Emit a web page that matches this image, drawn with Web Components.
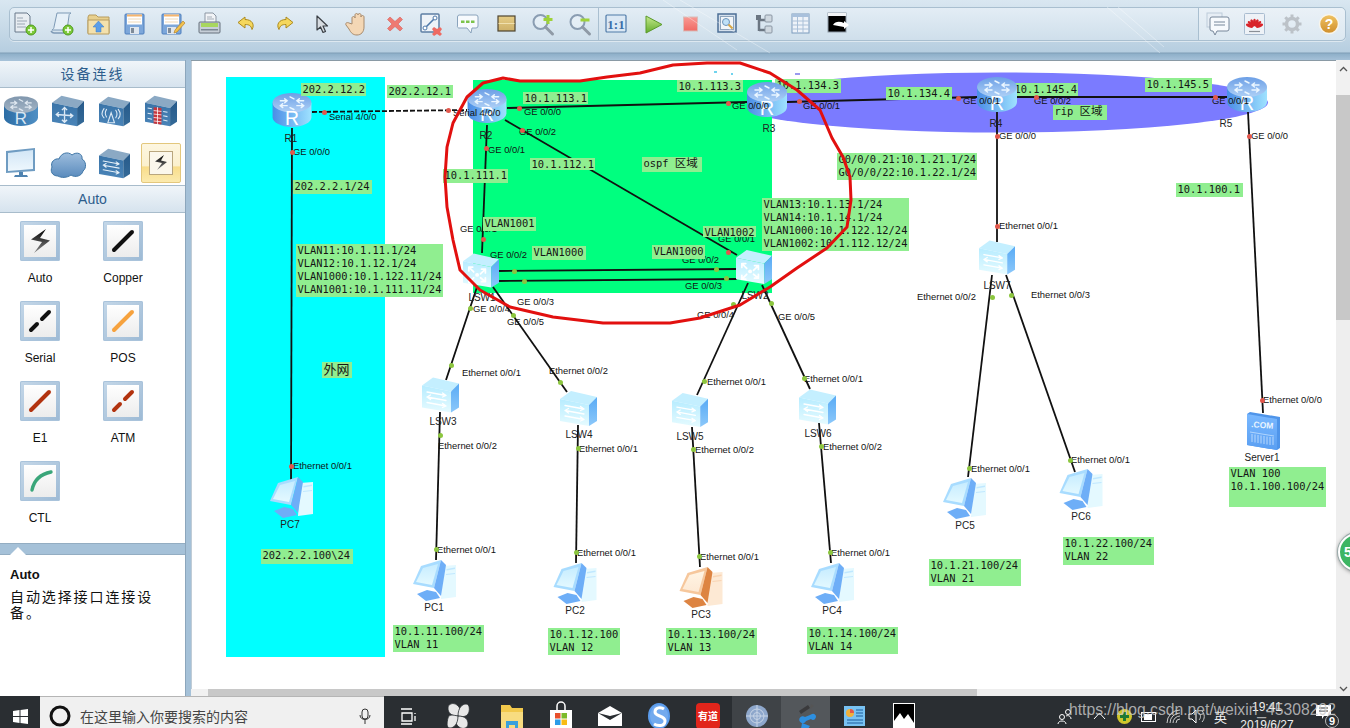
<!doctype html>
<html lang="zh">
<head>
<meta charset="utf-8">
<title>eNSP</title>
<style>
  html, body { margin: 0; height: 100%; overflow: hidden; background: #a5c1d8; }
</style>
</head>
<body>
<ensp-window>
  <tool-bar slot="top">
    <tool-icon slot="left" name="newdoc"></tool-icon>
    <tool-icon slot="left" name="scroll"></tool-icon>
    <tool-icon slot="left" name="open"></tool-icon>
    <tool-icon slot="left" name="save"></tool-icon>
    <tool-icon slot="left" name="saveas"></tool-icon>
    <tool-icon slot="left" name="print"></tool-icon>
    <tool-icon slot="left" name="undo"></tool-icon>
    <tool-icon slot="left" name="redo"></tool-icon>
    <tool-icon slot="left" name="cursor"></tool-icon>
    <tool-icon slot="left" name="hand"></tool-icon>
    <tool-icon slot="left" name="del"></tool-icon>
    <tool-icon slot="left" name="dellink"></tool-icon>
    <tool-icon slot="left" name="note"></tool-icon>
    <tool-icon slot="left" name="rect"></tool-icon>
    <tool-icon slot="left" name="zoomin"></tool-icon>
    <tool-icon slot="left" name="zoomout"></tool-icon>
    <tool-icon slot="mid" name="fit"></tool-icon>
    <tool-icon slot="mid" name="play"></tool-icon>
    <tool-icon slot="mid" name="stop"></tool-icon>
    <tool-icon slot="mid" name="capture"></tool-icon>
    <tool-icon slot="mid" name="tree"></tool-icon>
    <tool-icon slot="mid" name="table"></tool-icon>
    <tool-icon slot="mid" name="console"></tool-icon>
    <tool-icon slot="right" name="chat"></tool-icon>
    <tool-icon slot="right" name="huawei"></tool-icon>
    <tool-icon slot="right" name="gear"></tool-icon>
    <tool-icon slot="right" name="help"></tool-icon>
  </tool-bar>

  <side-bar slot="side">
    <panel-head>设备连线</panel-head>
    <device-grid>
      <device-tile kind="router"></device-tile>
      <device-tile kind="switch3"></device-tile>
      <device-tile kind="wireless"></device-tile>
      <device-tile kind="firewall"></device-tile>
      <device-tile kind="monitor"></device-tile>
      <device-tile kind="cloud"></device-tile>
      <device-tile kind="switch2"></device-tile>
      <device-tile kind="auto" selected></device-tile>
    </device-grid>
    <panel-head class="second">Auto</panel-head>
    <link-grid>
      <link-tile kind="auto">Auto</link-tile>
      <link-tile kind="copper">Copper</link-tile>
      <link-tile kind="serial">Serial</link-tile>
      <link-tile kind="pos">POS</link-tile>
      <link-tile kind="e1">E1</link-tile>
      <link-tile kind="atm">ATM</link-tile>
      <link-tile kind="ctl">CTL</link-tile>
    </link-grid>
    <help-box heading="Auto">自动选择接口连接设备。</help-box>
  </side-bar>

  <topo-canvas slot="canvas">
    <!-- these notes sit under the router icons -->
    <topo-note x="775" y="79" w="66" h="14">10.1.134.3</topo-note>
    <topo-note x="1013" y="83" w="65" h="13">10.1.145.4</topo-note>

    <topo-node kind="router" x="272" y="93" w="40" h="34" lx="291" ly="139">R1</topo-node>
    <topo-node kind="router" x="467" y="89" w="40" h="34" lx="486" ly="136">R2</topo-node>
    <topo-node kind="router" x="747" y="82" w="40" h="35" lx="769" ly="129">R3</topo-node>
    <topo-node kind="router" x="977" y="77" w="40" h="35" lx="996" ly="124">R4</topo-node>
    <topo-node kind="router" x="1227" y="77" w="40" h="35" lx="1226" ly="124">R5</topo-node>
    <topo-node kind="l3" x="463" y="253" w="36" h="35" lx="482" ly="298">LSW1</topo-node>
    <topo-node kind="l3" x="736" y="249" w="36" h="36" lx="755" ly="296">LSW2</topo-node>
    <topo-node kind="l2" x="422" y="377" w="37" h="36" lx="443" ly="422">LSW3</topo-node>
    <topo-node kind="l2" x="560" y="391" w="37" h="35" lx="579" ly="435">LSW4</topo-node>
    <topo-node kind="l2" x="672" y="392" w="36" h="36" lx="690" ly="437">LSW5</topo-node>
    <topo-node kind="l2" x="799" y="389" w="37" h="36" lx="818" ly="434">LSW6</topo-node>
    <topo-node kind="l2" x="979" y="240" w="36" h="35" lx="997" ly="286">LSW7</topo-node>
    <topo-node kind="pc" x="413" y="560" w="43" h="41" lx="434" ly="608">PC1</topo-node>
    <topo-node kind="pc" x="553" y="563" w="44" h="41" lx="575" ly="611">PC2</topo-node>
    <topo-node kind="pc-on" x="679" y="567" w="44" h="41" lx="701" ly="615">PC3</topo-node>
    <topo-node kind="pc" x="811" y="563" w="43" h="41" lx="832" ly="611">PC4</topo-node>
    <topo-node kind="pc" x="943" y="478" w="43" h="41" lx="965" ly="526">PC5</topo-node>
    <topo-node kind="pc" x="1059" y="469" w="44" h="41" lx="1081" ly="517">PC6</topo-node>
    <topo-node kind="pc" x="270" y="477" w="43" h="41" lx="290" ly="525">PC7</topo-node>
    <topo-node kind="server" x="1247" y="412" w="33" h="38" lx="1262" ly="458">Server1</topo-node>

    <topo-port d="324,112" c="r" x="329" y="117">Serial 4/0/0</topo-port>
    <topo-port d="448,110" c="r" x="453" y="113">Serial 4/0/0</topo-port>
    <topo-port d="519,108" c="r" x="524" y="112">GE 0/0/0</topo-port>
    <topo-port d="522,130" c="r" x="519" y="132">GE 0/0/2</topo-port>
    <topo-port d="486,148" c="r" x="488" y="150">GE 0/0/1</topo-port>
    <topo-port d="292,152" c="r" x="293" y="152">GE 0/0/0</topo-port>
    <topo-port d="483,239" c="r" x="460" y="229">GE 0/0/1</topo-port>
    <topo-port d="514,271" c="g" x="490" y="255">GE 0/0/2</topo-port>
    <topo-port d="524,281" c="g" x="517" y="302">GE 0/0/3</topo-port>
    <topo-port d="470,308" c="g" x="473" y="309">GE 0/0/4</topo-port>
    <topo-port d="513,315" c="g" x="507" y="322">GE 0/0/5</topo-port>
    <topo-port d="728,103" c="r" x="732" y="106">GE 0/0/0</topo-port>
    <topo-port d="799,101" c="r" x="803" y="106">GE 0/0/1</topo-port>
    <topo-port d="958,98" c="r" x="963" y="101">GE 0/0/1</topo-port>
    <topo-port d="1036,97" c="r" x="1034" y="101">GE 0/0/2</topo-port>
    <topo-port d="1215,97" c="r" x="1212" y="101">GE 0/0/1</topo-port>
    <topo-port d="1249,136" c="r" x="1251" y="136">GE 0/0/0</topo-port>
    <topo-port d="997,136" c="r" x="999" y="136">GE 0/0/0</topo-port>
    <topo-port d="997,226" c="r" x="999" y="226">Ethernet 0/0/1</topo-port>
    <topo-port d="728,252" c="r" x="718" y="239">GE 0/0/1</topo-port>
    <topo-port d="716,269" c="g" x="682" y="260">GE 0/0/2</topo-port>
    <topo-port d="726,278" c="g" x="685" y="286">GE 0/0/3</topo-port>
    <topo-port d="733,304" c="g" x="697" y="315">GE 0/0/4</topo-port>
    <topo-port d="771,303" c="g" x="778" y="317">GE 0/0/5</topo-port>
    <topo-port d="992,297" c="g" x="917" y="297">Ethernet 0/0/2</topo-port>
    <topo-port d="1011,295" c="g" x="1031" y="295">Ethernet 0/0/3</topo-port>
    <topo-port d="451,365" c="g" x="462" y="373">Ethernet 0/0/1</topo-port>
    <topo-port d="440,435" c="g" x="438" y="446">Ethernet 0/0/2</topo-port>
    <topo-port d="560,382" c="g" x="549" y="371">Ethernet 0/0/2</topo-port>
    <topo-port d="578,448" c="g" x="579" y="449">Ethernet 0/0/1</topo-port>
    <topo-port d="704,381" c="g" x="707" y="382">Ethernet 0/0/1</topo-port>
    <topo-port d="693,449" c="g" x="695" y="450">Ethernet 0/0/2</topo-port>
    <topo-port d="804,378" c="g" x="804" y="379">Ethernet 0/0/1</topo-port>
    <topo-port d="821,446" c="g" x="823" y="447">Ethernet 0/0/2</topo-port>
    <topo-port d="436,549" c="g" x="437" y="550">Ethernet 0/0/1</topo-port>
    <topo-port d="576,552" c="g" x="577" y="553">Ethernet 0/0/1</topo-port>
    <topo-port d="699,556" c="g" x="700" y="557">Ethernet 0/0/1</topo-port>
    <topo-port d="830,552" c="g" x="831" y="553">Ethernet 0/0/1</topo-port>
    <topo-port d="969,468" c="g" x="971" y="469">Ethernet 0/0/1</topo-port>
    <topo-port d="1070,460" c="g" x="1071" y="460">Ethernet 0/0/1</topo-port>
    <topo-port d="1262,400" c="r" x="1263" y="400">Ethernet 0/0/0</topo-port>
    <topo-port d="291,466" c="r" x="293" y="466">Ethernet 0/0/1</topo-port>

    <topo-note x="301" y="83" w="65" h="13">202.2.12.2</topo-note>
    <topo-note x="387" y="85" w="66" h="13">202.2.12.1</topo-note>
    <topo-note x="523" y="92" w="65" h="12">10.1.113.1</topo-note>
    <topo-note x="293" y="180" w="79" h="14">202.2.2.1/24</topo-note>
    <topo-note x="530" y="158" w="65" h="12">10.1.112.1</topo-note>
    <topo-note x="443" y="169" w="65" h="14">10.1.111.1</topo-note>
    <topo-note x="483" y="217" w="53" h="14">VLAN1001</topo-note>
    <topo-note x="532" y="246" w="54" h="14">VLAN1000</topo-note>
    <topo-note x="296" y="244" w="147" h="53">VLAN11:10.1.11.1/24<br>VLAN12:10.1.12.1/24<br>VLAN1000:10.1.122.11/24<br>VLAN1001:10.1.111.11/24</topo-note>
    <topo-note x="642" y="157" w="60" h="15">ospf <span style="font-size:11.5px">区域</span></topo-note>
    <topo-note x="677" y="80" w="66" h="12">10.1.113.3</topo-note>
    <topo-note x="886" y="87" w="66" h="13">10.1.134.4</topo-note>
    <topo-note x="1145" y="78" w="67" h="14">10.1.145.5</topo-note>
    <topo-note x="1053" y="105" w="54" h="15">rip <span style="font-size:11.5px">区域</span></topo-note>
    <topo-note x="1176" y="183" w="67" h="14">10.1.100.1</topo-note>
    <topo-note x="837" y="153" w="140" h="27">G0/0/0.21:10.1.21.1/24<br>G0/0/0/22:10.1.22.1/24</topo-note>
    <topo-note x="762" y="198" w="147" h="53">VLAN13:10.1.13.1/24<br>VLAN14:10.1.14.1/24<br>VLAN1000:10.1.122.12/24<br>VLAN1002:10.1.112.12/24</topo-note>
    <topo-note x="703" y="226" w="53" h="11">VLAN1002</topo-note>
    <topo-note x="652" y="245" w="53" h="14">VLAN1000</topo-note>
    <topo-note x="393" y="625" w="91" h="27">10.1.11.100/24<br>VLAN 11</topo-note>
    <topo-note x="548" y="628" w="72" h="27">10.1.12.100<br>VLAN 12</topo-note>
    <topo-note x="666" y="628" w="91" h="27">10.1.13.100/24<br>VLAN 13</topo-note>
    <topo-note x="807" y="627" w="91" h="27">10.1.14.100/24<br>VLAN 14</topo-note>
    <topo-note x="929" y="559" w="92" h="27">10.1.21.100/24<br>VLAN 21</topo-note>
    <topo-note x="1063" y="537" w="91" h="28">10.1.22.100/24<br>VLAN 22</topo-note>
    <topo-note x="1229" y="467" w="97" h="40">VLAN 100<br>10.1.100.100/24</topo-note>
    <topo-note x="261" y="549" w="92" h="15">202.2.2.100\24</topo-note>
    <topo-note x="322" y="362" w="30" h="16" style="font-size:13px;line-height:15px">外网</topo-note>
    <hand-scribble></hand-scribble>
  </topo-canvas>

  <v-scroll slot="vscroll"></v-scroll>
  <h-scroll slot="hscroll"></h-scroll>

  <task-bar slot="bottom">
    <task-app slot="apps" name="taskview"></task-app>
    <task-app slot="apps" name="fan"></task-app>
    <task-app slot="apps" name="folder" style="margin-left:5px"></task-app>
    <task-app slot="apps" name="store"></task-app>
    <task-app slot="apps" name="mail"></task-app>
    <task-app slot="apps" name="sogou"></task-app>
    <task-app slot="apps" name="youdao"></task-app>
    <task-app slot="apps" name="globe" state="open"></task-app>
    <task-app slot="apps" name="ensp" state="active"></task-app>
    <task-app slot="apps" name="card"></task-app>
    <task-app slot="apps" name="photo"></task-app>
  </task-bar>
</ensp-window>

<script>
// page position of the canvas: the diagram attributes below are in page coordinates
const ORIGIN_X = 191;
const ORIGIN_Y = 60;
const SANS = '"Liberation Sans", "Noto Sans CJK SC", sans-serif';
const MONO = '"DejaVu Sans Mono", "Noto Sans CJK SC", monospace';

function define(name, css, html, setup) {
  customElements.define(name, class extends HTMLElement {
    constructor() {
      super();
      this.attachShadow({ mode: "open" });
    }
    connectedCallback() {
      const body = typeof html === "function" ? html(this) : html;
      this.shadowRoot.innerHTML = `<style>${typeof css === "function" ? css(this) : css}</style>${body}`;
      if (setup) setup(this);
    }
  });
}

function svg(w, h, inner, vb) {
  return `<svg xmlns="http://www.w3.org/2000/svg" width="${w}" height="${h}" viewBox="${vb || `0 0 ${w} ${h}`}" style="overflow:visible">${inner}</svg>`;
}

function grad(id, a, b, dir) {
  const d = dir === "h" ? 'x1="0" y1="0" x2="1" y2="0"' : 'x1="0" y1="0" x2="0" y2="1"';
  return `<linearGradient id="${id}" ${d}><stop offset="0" stop-color="${a}"/><stop offset="1" stop-color="${b}"/></linearGradient>`;
}

// diagram and palette art
function routerArt(w, h, c) {
  return svg(w, h, `<defs>${grad("s", c[0], c[1], "h")}${grad("t", c[2], c[3])}</defs>
    <path d="M0 10V25C0 30.5 9 35 20 35S40 30.5 40 25V10Z" fill="url(#s)"/>
    <ellipse cx="20" cy="10" rx="20" ry="10" fill="url(#t)"/>
    <g stroke="${c[4]}" stroke-width="1.5" fill="none" stroke-linecap="round">
      <path d="M8 8h7M12.5 6l2.5 2-2.5 2M32 8h-7M27.5 6l-2.5 2 2.5 2M15 13H8M10.5 11L8 13l2.5 2M25 13h7M29.5 11l2.5 2-2.5 2"/>
      <path d="M18 4l4 2M22 17l-4-2"/>
    </g>
    <text x="20" y="33" text-anchor="middle" font-family="Liberation Sans" font-size="20" fill="${c[5]}">R</text>`, "0 0 40 35");
}

function cubeArt(w, h, c, inner) {
  return svg(w, h, `<defs>${grad("f", c[0], c[1])}${grad("r", c[3], c[4])}</defs>
    <polygon points="0,8 11,0 37,6 29,14" fill="${c[2]}"/>
    <polygon points="0,8 29,14 29,35 0,30" fill="url(#f)"/>
    <polygon points="29,14 37,6 37,30 29,35" fill="url(#r)"/>${inner}`, "0 0 37 35");
}

const ARROWS2 = (col) => `<g stroke="${col}" stroke-width="1.3" fill="none" stroke-linecap="round" stroke-linejoin="round">
  <path d="M5 14.5l19 3.5M20.5 15.5L24 18l-3.5 1.5"/>
  <path d="M24 23L5 19.5M8.5 17.500L5 19.500 8.500 22"/>
  <path d="M5 25l19 3.500M20.500 26L24 28.500l-3.500 1.500"/></g>`;
const ARROWS3 = (col) => `<circle cx="14.500" cy="22" r="2" fill="${col}"/><g stroke="${col}" stroke-width="1.800" fill="none" stroke-linecap="round" stroke-linejoin="round">
  <path d="M6 14l5 5M6 18v-4h4M23 16l-5 5M23 20v-4h-4M6 30l5-5M6 26v4h4M23 29l-5-4M23 25v4h-4"/></g>`;

const CYAN_CUBE = ["#b7ecff", "#e6fbff", "#c4efff", "#59abf5", "#8cc8fa"];
const DARK_CUBE = ["#3a74a8", "#4a84b8", "#8ba9c4", "#275a8a", "#346a98"];

function pcArt(w, h, c) {
  return svg(w, h, `<defs>${grad("sc", c[1], c[2])}</defs>
    <polygon points="30,6 43,5 43,37 28,39" fill="${c[2]}"/>
    <polygon points="33.500,9 42,7.500 42,9 33.500,10.500" fill="${c[0]}" opacity=".6"/>
    <polygon points="33,14 42,13 42,14 33,15" fill="${c[0]}" opacity=".6"/>
    <polygon points="0,24 8,6 28,0 21,28" fill="${c[0]}"/>
    <polygon points="3,22 10,8 25,4 19,25" fill="url(#sc)"/>
    <polygon points="28,0 33,5 28,36 21,28" fill="${c[3]}"/>
    <polygon points="4,34 14,30 23,32 27,38 13,41" fill="${c[3]}"/>`, "0 0 43 41");
}

const NODE_ART = {
  router: (w, h) => routerArt(w, h, ["#4a8de6", "#9fe2ff", "#6c9fe6", "#aed0f6", "#eaf6ff", "#ffffff"]),
  l3: (w, h) => cubeArt(w, h, CYAN_CUBE, ARROWS3("#ffffff")),
  l2: (w, h) => cubeArt(w, h, CYAN_CUBE, ARROWS2("#ffffff")),
  pc: (w, h) => pcArt(w, h, ["#a8dcff", "#c6ecff", "#e4f9ff", "#6eaef7"]),
  "pc-on": (w, h) => pcArt(w, h, ["#f6c79c", "#fff4e4", "#fde9d4", "#dd8442"]),
  server: (w, h) => svg(w, h, `<defs>${grad("b", "#79b8ff", "#5a9ff2")}</defs>
    <polygon points="0,2 3,0 33,5 33,36 30,38 0,33" fill="#4f95ea"/>
    <polygon points="0,2 30,7 30,38 0,33" fill="url(#b)"/>
    <text x="15" y="16" text-anchor="middle" font-family="Liberation Sans" font-weight="700" font-size="8.500" fill="#eaf5ff" transform="rotate(5 15 16)">.COM</text>
    <path d="M3 20l24 4" stroke="#cfe6ff" stroke-width=".7"/>
    <g stroke="#cfe6ff" stroke-width=".8"><path d="M5 22v8M8 22.500v8M11 23v8M14 23.500v8M17 24v8M20 24.500v8M23 25v8M26 25v8"/></g>`, "0 0 33 38"),
};

const LINK_ART = {
  auto: `<defs>${grad("z", "#000", "#888")}</defs><path d="M26 8L11 18.500l11 2.500-8 11 16-12.500-10-2.500z" fill="url(#z)"/>`,
  copper: `<path d="M11 29L29 11" stroke="#111" stroke-width="4" stroke-linecap="round"/>`,
  serial: `<path d="M11 29l6-6M22 18l7-7" stroke="#111" stroke-width="4" stroke-linecap="round"/>`,
  pos: `<path d="M11 29L29 11" stroke="#f6a23e" stroke-width="4" stroke-linecap="round"/>`,
  e1: `<path d="M11 29L29 11" stroke="#b2330f" stroke-width="4" stroke-linecap="round"/>`,
  atm: `<path d="M11 29l6-6M22 18l7-7" stroke="#b2330f" stroke-width="4" stroke-linecap="round"/>`,
  ctl: `<path d="M12 29C14 19 21 13 31 11" stroke="#3aa67a" stroke-width="3.400" fill="none" stroke-linecap="round"/>`,
};

const DEVICE_ART = {
  router: () => routerArt(34, 32, ["#2c6da5", "#4f8fc4", "#7f96ad", "#a5b6c6", "#dfe8f0", "#d9e6f2"]),
  switch3: () => cubeArt(32, 32, DARK_CUBE, `<g stroke="#dce9f5" stroke-width="1.600" fill="none"><path d="M14.500 14v16M5 21.500l19 1.500M11.500 16.500l3-3 3 3M11.500 27.500l3 3 3-3M8 19l-3 2.500 3 2.500M21 20.500l3 2.500-3 2.500"/></g>`),
  wireless: () => cubeArt(31, 31, DARK_CUBE, `<g stroke="#dce9f5" stroke-width="1.300" fill="none" stroke-linecap="round"><path d="M14.500 19l-4 12h8zM9 15c-2 3-2 6 0 9M6 14c-3 4-3 8 0 11M20 16c2 3 2 6 0 9M23 15c3 4 3 8 0 11"/></g>`),
  firewall: () => cubeArt(32, 32, DARK_CUBE, `<rect x="10" y="13" width="9" height="19" fill="#c8353c" transform="skewY(6) translate(0,-1)"/><g stroke="#fff" stroke-width=".9"><path d="M10 17l9 1M10 21l9 1M10 25l9 1M10 29l9 1M14.500 13v20"/></g><g stroke="#dce9f5" stroke-width="1.200"><path d="M3 14l5 1M3 20l5 1M3 26l5 1M21 18l5 1M21 23l5 1M21 28l5 1"/></g>`),
  monitor: () => svg(30, 30, `<defs>${grad("m", "#d2e6f6", "#eef7fd")}</defs>
    <path d="M0 3l29-3v23L0 25z" fill="#6f9cc2"/><path d="M2 5l25-3v19L2 23z" fill="url(#m)"/>
    <path d="M13 24h4v3h4l1 2H8l1-2h4z" fill="#4f83b0"/>`),
  cloud: () => svg(36, 30, `<defs>${grad("c", "#9dbddd", "#5a8bbd")}</defs>
    <path d="M8 28C2 28 0 23 2 19 0 14 5 10 9 11 11 5 18 3 22 7 27 3 33 6 32 11 36 13 37 20 33 23 32 28 25 30 21 27 17 30 11 30 8 28Z" fill="url(#c)" stroke="#3f76a6"/>`),
  switch2: () => cubeArt(31, 31, DARK_CUBE, ARROWS2("#e6f0f8")),
  auto: () => svg(24, 24, `<rect x=".5" y=".5" width="23" height="23" fill="#fbf7ec" stroke="#b9a67e"/><defs>${grad("z", "#000", "#888")}</defs><path d="M15 4L6 10.500l7 1.500-5 7 10-8-6-1.500z" fill="url(#z)"/>`),
};

const PLUS = (c1) => `<circle cx="18" cy="18" r="5" fill="${c1}" stroke="#4d9a1d"/><path d="M18 15v6M15 18h6" stroke="#fff" stroke-width="1.500"/>`;
const LENS = `<circle cx="9.500" cy="10" r="7" fill="#eef5fb" fill-opacity=".5" stroke="#8a9db2" stroke-width="2"/><path d="M14.500 15l7 7" stroke="#8f9aa6" stroke-width="3" stroke-linecap="round"/>`;
const FLOPPY = `<rect x="1" y="2" width="19" height="20" rx="1" fill="#7da7da" stroke="#4e7fbd"/><rect x="3" y="2.500" width="15" height="10" fill="#fff"/><rect x="3" y="2.500" width="15" height="2" fill="#f6b56d"/><path d="M4 7h13M4 10h13" stroke="#f0d9b8"/><rect x="6" y="15" width="9" height="7" fill="#dfe6ee"/><rect x="7" y="16" width="3" height="5" fill="#7f8b98"/>`;

const TOOL_ART = {
  newdoc: `<path d="M2 1h12l3 3v16H2z" fill="#e8edf2" stroke="#68788a"/><path d="M4 6h6M4 9h10M4 12h8M4 15h9" stroke="#9aa6b3"/>${PLUS("#7cc93a")}`,
  scroll: `<path d="M7 1h14c-2 1-2 2-2 3l-2 14H2c1.500-1 2-2 2-3z" fill="#e6f0f8" stroke="#7d99b5"/><path d="M1 19c1 1.500 2 2 3 2h10" fill="none" stroke="#7d99b5" stroke-width="1.500"/>${PLUS("#7cc93a")}`,
  open: `<path d="M1 5l1-2h7l2 2h11v16H1z" fill="#e8d08e" stroke="#b79c5e"/><path d="M1 8h21v14H1z" fill="#f3e1ad" stroke="#b79c5e"/><path d="M11.500 9l5.500 6h-3v5H9v-5H6z" fill="#5b9ee8" stroke="#3f7cc5" stroke-width=".5"/>`,
  save: FLOPPY,
  saveas: `${FLOPPY}<path d="M22 9l2 2-8 9-3 1 1-3z" fill="#f2c14e" stroke="#b5832b" stroke-width=".7"/>`,
  print: `<path d="M7 1h8l3 3v7H7z" fill="#f2f4f7" stroke="#8b96a3"/><path d="M9 5h5M9 7h7" stroke="#a4adb7"/><rect x="1" y="10" width="21" height="11" rx="1" fill="#c6ced7" stroke="#66717d"/><rect x="3" y="11" width="17" height="4" fill="#a8d65e"/><rect x="3" y="17" width="17" height="1.500" fill="#7c8793"/>`,
  undo: `<path d="M10 5L3 10.500 10 16v-3.500c4 0 6 1 7 5 3-5 0-10-7-10z" fill="#f5d75c" stroke="#ac8a1e"/>`,
  redo: `<path d="M14 5l7 5.500-7 5.500v-3.500c-4 0-6 1-7 5-3-5 0-10 7-10z" fill="#f5d75c" stroke="#ac8a1e"/>`,
  cursor: `<path d="M8 4v14l3.500-3 2.500 5.500 2.500-1-2.500-5.500h4.500z" fill="#d7dce1" stroke="#3a3f45" stroke-width="1.200" stroke-linejoin="round"/>`,
  hand: `<path d="M6 12V6c0-2 3-2 3 0V3c0-2 3-2 3 0v0c0-2 3-2 3 0v2c0-2 3-2 3 0v10c0 5-3 8-7 8s-6-2-8-6l-3-4c-1-2 1-3 3-2z" fill="#f4d7b5" stroke="#a78a6c"/>`,
  del: `<path d="M7 5l5 4.500L17 5l2.500 2.500L15 12l4.500 4.500L17 19l-5-4.500L7 19l-2.500-2.500L9 12 4.500 7.500z" fill="#ee7a72" stroke="#d8605a" stroke-width=".6"/>`,
  dellink: `<rect x="1" y="2" width="18" height="18" rx="1" fill="#eef3f8" stroke="#5d7fa4" stroke-width="1.500"/><path d="M5 16L15 6" stroke="#4d78aa" stroke-width="1.600"/><circle cx="5" cy="16" r="2" fill="#fff" stroke="#4d78aa"/><circle cx="15" cy="6" r="2" fill="#fff" stroke="#4d78aa"/><path d="M14 15l3 2 3-2 2 2-2 3 2 2-2 2-3-2-3 2-2-2 2-2-2-3z" fill="#ee6a62"/>`,
  note: `<path d="M2 3h17a2 2 0 0 1 2 2v9a2 2 0 0 1-2 2h-4l-1 5-4-5H2a1.500 1.500 0 0 1-1.500-2V5A2 2 0 0 1 2 3z" fill="#f7fafd" stroke="#8aa3bc"/><g fill="#7cc34a"><rect x="4" y="8.500" width="3.500" height="2.500"/><rect x="9" y="8.500" width="3.500" height="2.500"/><rect x="14" y="8.500" width="3.500" height="2.500"/></g>`,
  rect: `<defs>${grad("r", "#e6cd86", "#cdb069")}</defs><rect x="4" y="4" width="17" height="15" fill="url(#r)" stroke="#4e4430" stroke-width="1.200"/><path d="M4.500 11.500h16" stroke="#f0e0ae"/>`,
  zoomin: `${LENS}<path d="M17 3v9M12.500 7.500h9" stroke="#9ed23a" stroke-width="3"/>`,
  zoomout: `${LENS}<path d="M12.500 8h9" stroke="#9ed23a" stroke-width="3"/>`,
  fit: `<rect x="1" y="3" width="20" height="17" rx="1" fill="#dbe8f4" stroke="#4f7aa8" stroke-width="1.200"/><text x="11" y="16.500" text-anchor="middle" font-family="Liberation Serif" font-weight="700" font-size="13" fill="#3a6ea8">1:1</text>`,
  play: `<defs>${grad("g", "#c6e98d", "#63ad2c")}</defs><path d="M4 4l16 8.500L4 21z" fill="url(#g)" stroke="#5a9a2a"/>`,
  stop: `<defs>${grad("g", "#f99a94", "#f06a64")}</defs><rect x="4.500" y="5" width="14" height="14" fill="url(#g)" stroke="#d8bdb9"/>`,
  capture: `<rect x="2" y="2" width="18" height="18" fill="#d5e0ec" stroke="#4c6f96" stroke-width="1.500"/><rect x="4.500" y="4.500" width="13" height="13" fill="#f1f5f9" stroke="#8da4bc"/><circle cx="10" cy="10" r="3.500" fill="#bfe0f7" stroke="#6e93b8"/><path d="M12.500 12.500l4 4" stroke="#d6a545" stroke-width="2"/>`,
  tree: `<path d="M6 3v16M6 8h7M6 18h7" stroke="#6b7682" stroke-width="2.500" fill="none"/><rect x="12" y="3" width="7" height="7" rx="1" fill="#cfd8e0" stroke="#8a96a3"/><rect x="12" y="14" width="7" height="7" rx="1" fill="#cfd8e0" stroke="#8a96a3"/><rect x="3" y="3" width="5" height="5" fill="#6b7682"/>`,
  table: `<rect x="2" y="2" width="17" height="19" fill="#eef3f9" stroke="#7d9bbd"/><rect x="2" y="2" width="17" height="3" fill="#a9c1dc"/><path d="M2 9h17M2 13h17M2 17h17M7.500 5v16M13 5v16" stroke="#aac0d8"/>`,
  console: `<rect x="1" y="1" width="18" height="19" fill="#000" stroke="#8d99a6"/><rect x="1" y="1" width="18" height="3" fill="#f2f4f6"/><path d="M6 13c2-4 7-4 11-2v-2l5 4-5 4v-2c-4-1-7-1-11-2z" fill="#fff"/>`,
  chat: `<rect x="1" y="1" width="15" height="14" fill="#e7eef5" stroke="#bdccda"/><path d="M6 5h15a2 2 0 0 1 2 2v10a2 2 0 0 1-2 2H11l-2 4-2-4H6a2 2 0 0 1-2-2V7a2 2 0 0 1 2-2z" fill="#f7fafd" stroke="#77879a"/><path d="M8 10h11M8 13h11" stroke="#77879a"/>`,
  huawei: `<rect x="1.500" y="1.500" width="20" height="21" rx="1" fill="#eef2f7" stroke="#a9bcd0"/><g fill="#d8242a">${[-66, -44, -22, 0, 22, 44, 66].map((a) => `<ellipse cx="11.500" cy="10.500" rx="1.500" ry="3.800" transform="rotate(${a} 11.500 16)"/>`).join("")}</g><path d="M6 19.500h11" stroke="#8a8f96" stroke-width="1.200"/>`,
  gear: `<circle cx="12" cy="12" r="5.500" fill="none" stroke="#bcc2c8" stroke-width="3.500"/><g stroke="#bcc2c8" stroke-width="3">${[0, 45, 90, 135].map((a) => `<path d="M12 2.500v19" transform="rotate(${a} 12 12)" stroke-dasharray="3 13 3"/>`).join("")}</g>`,
  help: `<defs>${grad("h", "#f0c465", "#cf8e2a")}</defs><circle cx="12" cy="12" r="9.500" fill="url(#h)" stroke="#f8f5ec" stroke-width="1.500"/><text x="12" y="17" text-anchor="middle" font-family="Liberation Sans" font-weight="700" font-size="14" fill="#fff">?</text>`,
};

const TASK_ART = {
  taskview: svg(17, 17, `<path d="M1 1h11M1 16h11M2 5h10v8H2zM15 5v1M15 8v5" stroke="#fff" fill="none" stroke-width="1.300"/>`),
  fan: svg(22, 26, `<g fill="#e8e8e8" stroke="#2a2e32" stroke-width=".8"><path d="M11 13C3 13 1 9 1 5S6-1 10 2 13 8 11 13Z"/><path d="M11 13C11 5 15 1 19 1s4 7 2 10-6 3-10 2Z"/><path d="M11 13c8 0 10 4 10 8s-5 6-9 3-3-6-1-11Z"/><path d="M11 13c0 8-4 12-8 12S0 19 1 15s5-3 10-2Z"/></g>`),
  folder: svg(22, 25, `<path d="M0 1h9l2 3h11v21H0z" fill="#f2c94c"/><path d="M0 8h22v17H0z" fill="#f8dc80"/><path d="M5 25v-8h12v8h-3v-4H8v4z" fill="#3aa0dc"/>`),
  store: svg(22, 28, `<path d="M7 8V4a4 4 0 0 1 8 0v4" fill="none" stroke="#fff" stroke-width="1.500"/><path d="M0 8h22v20H0z" fill="#fff"/><rect x="5" y="11" width="5.500" height="5.500" fill="#e8502c"/><rect x="11.500" y="11" width="5.500" height="5.500" fill="#7cbb2c"/><rect x="5" y="17.500" width="5.500" height="5.500" fill="#2b9ce8"/><rect x="11.500" y="17.500" width="5.500" height="5.500" fill="#f8bb14"/>`),
  mail: svg(24, 20, `<path d="M0 7L12 0l12 7v13H0z" fill="#fff"/><path d="M0 7l12 7 12-7-12 3z" fill="#2a2e32"/>`),
  sogou: svg(22, 26, `<ellipse cx="11" cy="13" rx="11" ry="13" fill="#5b9cec"/><ellipse cx="11" cy="13" rx="9" ry="11" fill="#fff" opacity=".15"/><path d="M16 6c-3-2-9-2-9 3s10 3 10 9-8 5-11 3" fill="none" stroke="#fff" stroke-width="3"/>`),
  youdao: svg(24, 26, `<rect width="24" height="26" rx="4" fill="#e1251b"/><text x="12" y="17" text-anchor="middle" font-family="Noto Sans CJK SC" font-size="10" font-weight="700" fill="#fff">有道</text>`),
  globe: svg(22, 22, `<circle cx="11" cy="11" r="11" fill="#8ea7cb"/><g stroke="#c7d4e6" fill="none"><circle cx="11" cy="11" r="7"/><circle cx="11" cy="11" r="3.500"/><path d="M0 11h22M11 0v22"/></g>`),
  ensp: svg(20, 26, `<path d="M3 8l9-6 2 3-9 6z" fill="#3a3a3c"/><path d="M15 1l3 2-4 3z" fill="#555"/><path d="M16 11a3 3 0 1 1-1 5l-5 2a3.500 3.500 0 1 1-1-4l5-2z" fill="#2d8fe0"/><path d="M6 20l8 3-2 3H5z" fill="#2d8fe0"/>`),
  card: svg(21, 20, `<rect width="21" height="20" fill="#78c2f2"/><circle cx="6" cy="7" r="4" fill="#f0b03a"/><path d="M6 7V3a4 4 0 0 1 4 4z" fill="#e2574c"/><path d="M12 4h7M12 7h7M12 10h7M3 14h16M3 17h16" stroke="#1c5d9e"/>`),
  photo: svg(22, 27, `<rect x=".5" y=".5" width="21" height="26" fill="#000" stroke="#fff"/><path d="M1 26V18l6-8 4 6 4-5 6 9v6z" fill="#fff"/>`),
};

define("ensp-window", `
  :host { display: grid; width: 1350px; height: 728px; overflow: hidden; background: #a5c1d8;
    grid-template-columns: 185px 6px 1145px 14px; grid-template-rows: 60px 629px 7px 32px;
    font-family: ${SANS}; position: relative; }
  ::slotted([slot=top]) { grid-column: 1 / -1; }
  ::slotted([slot=side]) { grid-column: 1; grid-row: 2 / 4; }
  ::slotted([slot=canvas]) { grid-column: 3; grid-row: 2; }
  ::slotted([slot=vscroll]) { grid-column: 4; grid-row: 2 / 4; }
  ::slotted([slot=hscroll]) { grid-column: 3; grid-row: 3; }
  ::slotted([slot=bottom]) { grid-column: 1 / -1; grid-row: 4; }
  .bubble { position: absolute; left: 1338px; top: 532px; width: 36px; height: 36px; border-radius: 50%;
    background: #3cb563; border: 2px solid #fff; box-shadow: 0 0 0 1px #9aa, 0 1px 4px rgba(0,0,0,.5);
    color: #fff; font: 700 14px ${SANS}; line-height: 36px; padding-left: 4px; box-sizing: content-box; }
`, `<slot name="top"></slot><slot name="side"></slot><slot name="canvas"></slot><slot name="vscroll"></slot><slot name="hscroll"></slot><slot name="bottom"></slot><div class="bubble">5</div>`);

define("tool-bar", `
  :host { display: block; box-sizing: border-box; height: 60px; padding: 7px 4px 0 9px; position: relative;
    background: linear-gradient(180deg, #d9e7f1 0, #c6d9e7 30px, #b6cee0 52px, #7e9db6 53px, #8fb0c9 54px, #a5c1d8 60px); }
  .panel { display: flex; height: 34px; box-sizing: border-box; border: 1px solid #a9bfd0; border-radius: 5px; position: relative;
    background: linear-gradient(180deg, #e3edf5 0, #cfdfeb 100%); box-shadow: 0 1px 0 #dde8f0; }
  .group { display: flex; align-items: center; gap: 13px; }
  .left { padding: 0 6px 0 3px; border-right: 1px solid #a9bfd0; }
  .mid { padding-left: 6px; flex: 1; border-right: 1px solid #a9bfd0; }
  .right { padding: 0 4px 0 7px; border-radius: 0 5px 5px 0; background: linear-gradient(180deg, #eaf1f7, #dce8f1); }
  .glare { position: absolute; left: 0; top: 0; pointer-events: none; }
`, `<div class="panel">
    <div class="group left"><slot name="left"></slot></div>
    <div class="group mid"><slot name="mid"></slot></div>
    <div class="group right"><slot name="right"></slot></div>
  </div>
  ${svg(1350, 53, `<g stroke="#fff" stroke-opacity=".35" fill="none"><path d="M663 0l74 50M680 0l90 53M1107 7l53 46M1118 7l46 40"/></g>`).replace("<svg ", '<svg class="glare" ')}`);

define("tool-icon", `:host { display: block; width: 24px; height: 24px; } svg { display: block; }`,
  (el) => svg(24, 24, TOOL_ART[el.getAttribute("name")]));

define("side-bar", `
  :host { display: flex; flex-direction: column; box-shadow: 1px 0 0 #8ca6bc; }
`, `<slot></slot>`);

define("panel-head", `
  :host { display: block; height: 27px; box-sizing: border-box; text-align: center; line-height: 26px; margin-top: 1px;
    color: #2d5d8c; font-size: 14px; letter-spacing: 2px; border-bottom: 1px solid #a8bccb;
    background: linear-gradient(180deg, #f0f5f9, #d6e3ee); }
  :host(.second) { height: 28px; margin-top: 0; letter-spacing: 0; border-top: 1px solid #a8bccb; }
`, `<slot></slot>`);

define("device-grid", `
  :host { display: grid; grid-template-columns: repeat(4, 40px); gap: 10px 6.500px; height: 97px; box-sizing: border-box; padding: 3px 0 0 1px; background: #fff; }
`, `<slot></slot>`);

define("device-tile", `
  :host { display: flex; align-items: center; justify-content: center; width: 40px; height: 40px; box-sizing: border-box; }
  :host([selected]) { border: 1px solid #e3c77c; border-radius: 2px; background: linear-gradient(180deg, #fdf6e0 0, #fbf0cd 58%, #f9dd8a 60%, #fbeaae 100%); }
  svg { display: block; }
`, (el) => DEVICE_ART[el.getAttribute("kind")]());

define("link-grid", `
  :host { display: grid; grid-template-columns: 83px 83px; grid-auto-rows: 64px; row-gap: 16px; align-content: start;
    box-sizing: border-box; height: 330px; padding: 8px 0 0 0; background: #fff; box-shadow: 0 1px 0 #93adc2; }
`, `<slot></slot>`);

define("link-tile", `
  :host { display: flex; flex-direction: column; align-items: center; font-size: 12px; color: #111; width: 80px; margin-left: 0; }
  .box { width: 40px; height: 40px; box-sizing: border-box; padding: 0; border-radius: 2px; position: relative;
    background: linear-gradient(135deg, #c4d7e8, #9dbad5); box-shadow: inset 0 0 0 1px #a9c3db; }
  .box::before { content: ""; position: absolute; inset: 4px; background: linear-gradient(180deg, #ffffff, #ececec); }
  svg { position: absolute; left: 0; top: 0; }
  .name { margin-top: 10px; line-height: 14px; }
`, (el) => `<div class="box">${svg(40, 40, LINK_ART[el.getAttribute("kind")])}</div><div class="name"><slot></slot></div>`);

define("help-box", `
  :host { display: block; flex: 1; position: relative; margin-top: 12px; padding: 12px 20px 0 10px; background: #fff; box-shadow: 0 -1px 0 #93adc2; }
  :host::before { content: ""; position: absolute; left: 10px; top: -8px; width: 0; height: 0;
    border: 8px solid transparent; border-top: 0; border-bottom-color: #fff; }
  b { display: block; font: 700 13px/16px ${SANS}; color: #111; margin-bottom: 6px; }
  p { margin: 0; font: 14px/16px ${SANS}; letter-spacing: 1.900px; color: #111; }
`, (el) => `<b>${el.getAttribute("heading")}</b><p><slot></slot></p>`);

define("topo-canvas", `
  :host { display: block; position: relative; overflow: hidden; background: #fff; box-shadow: inset 0 1px 0 #8a9aa5, inset 1px 0 0 #c0ccd6;
    font-family: ${SANS}; }
  .zone { position: absolute; }
  svg { position: absolute; left: 0; top: 0; }
`, () => {
  const zones = [[225.5, 77, 159.5, 580, "#00ffff"], [473, 80, 299, 213, "#00ff7f"]];
  const lines = [
    [292, 128, 291, 490], [507, 108, 747, 102], [787, 102, 977, 97], [1017, 97, 1227, 97],
    [487, 125, 482, 253], [505, 120, 737, 255], [498, 271, 737, 269], [498, 281, 737, 279],
    [477, 287, 446, 380], [493, 287, 567, 392], [748, 283, 697, 395], [762, 285, 810, 389],
    [997, 112, 997, 242], [992, 275, 968, 477], [1006, 275, 1075, 472], [1248, 112, 1263, 413],
    [440, 412, 436, 560], [578, 425, 576, 563], [692, 427, 700, 567], [819, 423, 831, 563],
  ];
  const zoneHtml = zones.map(([x, y, w, h, c]) =>
    `<div class="zone" style="left:${x - ORIGIN_X}px;top:${y - ORIGIN_Y}px;width:${w}px;height:${h}px;background:${c}"></div>`).join("");
  const lineHtml = lines.map(([a, b, c, d]) => `<line x1="${a}" y1="${b}" x2="${c}" y2="${d}"/>`).join("");
  return `<svg width="1145" height="629" viewBox="${ORIGIN_X} ${ORIGIN_Y} 1145 629">
      <ellipse cx="1000" cy="102.500" rx="268" ry="30" fill="#7b7bff"/>
      <g fill="#6fd3ee"><rect x="714" y="71" width="3" height="2"/><rect x="731" y="73" width="2" height="2"/></g>
      <rect x="795" y="73" width="5" height="2" fill="#9a9af0"/>
    </svg>
    ${zoneHtml}
    <svg width="1145" height="629" viewBox="${ORIGIN_X} ${ORIGIN_Y} 1145 629">
      <g stroke="#111" stroke-width="1.800">${lineHtml}
        <line x1="312" y1="112" x2="467" y2="110" stroke-dasharray="5 2"/></g>
    </svg>
    <slot></slot>`;
});

define("topo-node", (el) => `
  :host { position: absolute; display: block; left: ${+el.getAttribute("x") - ORIGIN_X}px; top: ${+el.getAttribute("y") - ORIGIN_Y}px;
    width: ${el.getAttribute("w")}px; height: ${el.getAttribute("h")}px; }
  svg { display: block; }
  .name { position: absolute; white-space: nowrap; transform: translate(-50%, -50%); font-size: 10px; line-height: 12px; color: #222;
    left: ${+el.getAttribute("lx") - +el.getAttribute("x")}px; top: ${+el.getAttribute("ly") - +el.getAttribute("y")}px; }
`, (el) => `${NODE_ART[el.getAttribute("kind")](+el.getAttribute("w"), +el.getAttribute("h"))}<div class="name"><slot></slot></div>`);

define("topo-port", (el) => {
  const [dx, dy] = el.getAttribute("d").split(",").map(Number);
  const x = +el.getAttribute("x");
  const y = +el.getAttribute("y");
  return `
  :host { position: absolute; display: block; left: ${x - ORIGIN_X}px; top: ${y - ORIGIN_Y - 6}px; height: 12px;
    white-space: nowrap; font-size: 9.400px; line-height: 12px; color: #111; }
  i { position: absolute; width: 5px; height: 5px; border-radius: 50%; left: ${dx - x - 2.5}px; top: ${dy - y + 6 - 2.5}px;
    background: ${el.getAttribute("c") === "r" ? "#e2574c" : "#8cc63f"}; }`;
}, `<i></i><slot></slot>`);

define("topo-note", (el) => `
  :host { position: absolute; display: block; box-sizing: border-box; overflow: hidden; left: ${+el.getAttribute("x") - ORIGIN_X}px; top: ${+el.getAttribute("y") - ORIGIN_Y}px;
    width: ${el.getAttribute("w")}px; height: ${el.getAttribute("h")}px; background: #90ee90; padding: 0 0 0 1.500px;
    font: 10.400px/13px ${MONO}; color: #151515; white-space: nowrap; }
`, `<slot></slot>`);

define("hand-scribble", `:host { position: absolute; left: 0; top: 0; pointer-events: none; display: block; } svg { display: block; }`, () => {
  const pts = "503,78 520,81 580,81 607,77 640,73 673,65 707,63 740,63 770,73 797,90 820,110 832,138 843,157 850,177 851,200 847,227 827,248 797,268 770,287 740,305 700,318 670,323 603,323 553,317 510,307 480,290 460,270 453,240 447,207 445,177 447,147 453,123 467,97 483,83 503,78";
  return `<svg width="1145" height="629" viewBox="${ORIGIN_X} ${ORIGIN_Y} 1145 629"><polyline points="${pts}" fill="none" stroke="#e2100f" stroke-width="3" stroke-linejoin="round" stroke-linecap="round"/></svg>`;
});

define("v-scroll", `
  :host { display: flex; flex-direction: column; background: #eeeeee; }
  .btn { height: 35px; background: #f1f1f1; }
  .thumb { height: 225px; background: #c8c8c8; }
  .rest { flex: 1; }
  .end { height: 14px; display: flex; justify-content: center; align-items: center; }
  svg { display: block; margin: 6px auto 0; }
  .end svg { margin: 0; }
`, `<div class="btn">${svg(9, 6, `<path d="M1 5l3.500-3.500L8 5" fill="none" stroke="#555" stroke-width="1.300"/>`)}</div>
  <div class="thumb"></div><div class="rest"></div>
  <div class="end">${svg(9, 6, `<path d="M1 1l3.500 3.500L8 1" fill="none" stroke="#555" stroke-width="1.300"/>`)}</div>`);

define("h-scroll", `
  :host { display: flex; background: #eeeeee; overflow: hidden; }
  .btn { width: 17px; background: #f1f1f1; }
  .thumb { width: 769px; background: #c8c8c8; }
`, `<div class="btn"></div><div class="thumb"></div>`);

define("task-bar", `
  :host { display: flex; align-items: stretch; height: 32px; background: #2a2e32; position: relative; overflow: hidden; color: #fff; }
  .start { width: 40px; display: flex; align-items: center; justify-content: center; box-sizing: border-box; padding-top: 8px; }
  .search { width: 344px; box-sizing: border-box; background: #f0f0f0; border-top: 1px solid #b5b5b5; display: flex; align-items: center; padding: 7px 0 0 9px; color: #444;
    font: 14px "Noto Sans CJK SC", ${SANS}; white-space: nowrap; }
  .search span { margin-left: 9px; flex: 1; }
  .search svg:last-child { margin-right: 13px; }
  .apps { display: flex; }
  .tray { display: flex; align-items: center; margin-left: 129px; box-sizing: border-box; padding-top: 8px; }
  .tray > * { flex: none; }
  .ime { font: 13px "Noto Sans CJK SC", sans-serif; width: 13px; margin-left: 9px; color: #eee; line-height: 13px; }
  .clock { width: 58px; margin-left: 11px; text-align: center; font-size: 12px; line-height: 18px; color: #eee; align-self: flex-start; margin-top: -6px; }
  .notice { width: 23px; margin-left: 20px; }
  .mark { position: absolute; left: 1069px; top: 3px; font-size: 15.700px; line-height: 22px; color: rgba(205, 205, 205, .8); white-space: nowrap; }
  svg { display: block; }
`, `<div class="start">${svg(15, 15, `<path d="M0 2l6.500-1v6H0zM7.500 1L15 0v7H7.500zM0 8h6.500v6L0 13zM7.500 8H15v7l-7.500-1z" fill="#fff"/>`)}</div>
  <div class="search">
    ${svg(22, 22, `<circle cx="11" cy="11" r="9" fill="none" stroke="#111" stroke-width="3"/>`)}
    <span>在这里输入你要搜索的内容</span>
    ${svg(12, 17, `<rect x="3" y="1" width="6" height="10" rx="3" fill="none" stroke="#333"/><path d="M1 7c0 6 10 6 10 0M6 12v4" fill="none" stroke="#333"/>`)}
  </div>
  <div class="apps"><slot name="apps"></slot></div>
  <div class="tray">
    ${svg(15, 17, `<circle cx="5" cy="9" r="2.500" fill="none" stroke="#fff"/><path d="M1 16c0-4 8-4 8 0" fill="none" stroke="#fff"/><circle cx="11" cy="4" r="2.500" fill="none" stroke="#fff"/><path d="M9 8c2-1 5 0 5 3" fill="none" stroke="#fff"/>`)}
    <span style="margin-left:21px">${svg(13, 8, `<path d="M1 7l5.500-6L12 7" fill="none" stroke="#fff"/>`)}</span>
    <span style="margin-left:11px">${svg(15, 15, `<circle cx="7.500" cy="7.500" r="7.500" fill="#cfc62b"/><path d="M7.500 3v9M3 7.500h9" stroke="#1f7a32" stroke-width="3"/>`)}</span>
    <span style="margin-left:9px">${svg(15, 11, `<rect x=".5" y="1.500" width="14" height="9" fill="none" stroke="#fff"/><rect x="3" y="3" width="8" height="6" fill="#fff"/>`)}</span>
    <span style="margin-left:10px">${svg(15, 15, `<g fill="none" stroke="#ccc"><path d="M1 14A13 13 0 0 1 14 1M4 14a10 10 0 0 1 10-10M7 14a7 7 0 0 1 7-7M10 14a4 4 0 0 1 4-4"/></g>`)}</span>
    <span style="margin-left:7px">${svg(17, 15, `<path d="M1 5h3l4-4v13l-4-4H1z" fill="none" stroke="#fff"/><path d="M11 4c2 2 2 5 0 7M14 2c3 3 3 8 0 11" fill="none" stroke="#ccc"/>`)}</span>
    <span class="ime">英</span>
    <span class="clock">19:41<br>2019/6/27</span>
    <span class="notice">${svg(23, 26, `<path d="M0 2h15v11H8l-2 3v-3H0z" fill="#fff"/><path d="M3 5h9M3 8h9" stroke="#2a2e32"/><circle cx="16" cy="18" r="6.500" fill="#2a2e32" stroke="#bbb"/><text x="16" y="22" text-anchor="middle" font-family="Liberation Sans" font-weight="700" font-size="11" fill="#fff">9</text>`)}</span>
  </div>
  <div class="mark">https://blog.csdn.net/weixin_45308292</div>`);

define("task-app", (el) => `
  :host { display: flex; width: 49px; align-items: center; justify-content: center; box-sizing: border-box; padding-top: 8px;
    background: ${el.getAttribute("state") === "active" ? "#53575b" : el.getAttribute("state") === "open" ? "#3f4347" : "transparent"}; }
  svg { display: block; }
`, (el) => TASK_ART[el.getAttribute("name")]);
</script>
</body>
</html>
